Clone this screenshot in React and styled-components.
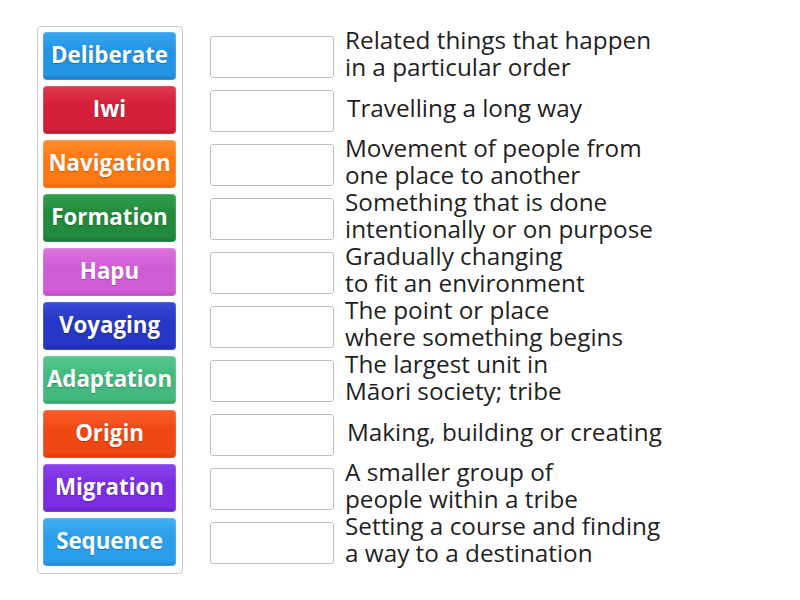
import React from 'react';
import styled, { createGlobalStyle } from 'styled-components';

const GlobalStyle = createGlobalStyle`
  body {
    margin: 0;
    background: #fff;
    font-family: "Open Sans", "Noto Sans", sans-serif;
  }
`;

const Page = styled.div`
  display: flex;
  align-items: flex-start;
  gap: 27px;
  padding: 26px 0 0 37px;
`;

const TileBox = styled.div`
  display: flex;
  flex-direction: column;
  gap: 6px;
  padding: 5px 6px 7px 5px;
  border: 1px solid #c8c8c8;
  border-radius: 4px;
`;

const Tile = styled.div`
  width: 133px;
  height: 48px;
  box-sizing: border-box;
  padding-bottom: 3px;
  display: flex;
  align-items: center;
  justify-content: center;
  border-radius: 4px;
  background: linear-gradient(${p => p.$light}, ${p => p.$color} 40%, ${p => p.$color} 88%, ${p => p.$dark});
  box-shadow: inset 0 0 0 1px rgba(255, 255, 255, 0.15);
  color: #fff;
  font-size: 22.3px;
  font-weight: 700;
  text-shadow: 0 1px 1px rgba(0, 0, 0, 0.25);
  white-space: nowrap;
`;

const Answers = styled.div`
  display: flex;
  flex-direction: column;
  padding-top: 3px;
`;

const Row = styled.div`
  height: 54px;
  display: flex;
  align-items: center;
  gap: 11px;
`;

const Slot = styled.div`
  width: 124px;
  height: 42px;
  box-sizing: border-box;
  border: 1px solid #bdbdbd;
  border-radius: 3px;
  background: #fff;
  margin-top: 1px;
`;

const Clue = styled.div`
  font-size: 24.3px;
  line-height: 27px;
  color: #1f1f1f;
  white-space: nowrap;
  margin-bottom: 6px;
  margin-left: ${p => (p.$single ? '2px' : '0')};
`;

const tiles = [
  ['Deliberate', '#2394e4', '#3aa6f0', '#1a7cc8'],
  ['Iwi', '#d41f3a', '#e0384f', '#b8172f'],
  ['Navigation', '#ff7812', '#ff8d30', '#e8650a'],
  ['Formation', '#218a3c', '#31a04e', '#1a7431'],
  ['Hapu', '#d15dd6', '#dc74e0', '#bb4ac0'],
  ['Voyaging', '#2636c6', '#3a4cd8', '#1d2aa8'],
  ['Adaptation', '#43b97e', '#58c990', '#36a06b'],
  ['Origin', '#ef4812', '#fa5f2a', '#d63a0a'],
  ['Migration', '#7a2ee0', '#8c45ec', '#6522c4'],
  ['Sequence', '#2a9eea', '#42aff2', '#1e86d2'],
];

const clues = [
  ['Related things that happen', 'in a particular order'],
  ['Travelling a long way'],
  ['Movement of people from', 'one place to another'],
  ['Something that is done', 'intentionally or on purpose'],
  ['Gradually changing', 'to fit an environment'],
  ['The point or place', 'where something begins'],
  ['The largest unit in', 'Māori society; tribe'],
  ['Making, building or creating'],
  ['A smaller group of', 'people within a tribe'],
  ['Setting a course and finding', 'a way to a destination'],
];

export default function App() {
  return (
    <>
      <GlobalStyle />
      <Page>
        <TileBox>
          {tiles.map(([label, color, light, dark]) => (
            <Tile key={label} $color={color} $light={light} $dark={dark}>
              {label}
            </Tile>
          ))}
        </TileBox>
        <Answers>
          {clues.map((lines, i) => (
            <Row key={i}>
              <Slot />
              <Clue $single={lines.length === 1}>
                {lines.map(l => (
                  <div key={l}>{l}</div>
                ))}
              </Clue>
            </Row>
          ))}
        </Answers>
      </Page>
    </>
  );
}
